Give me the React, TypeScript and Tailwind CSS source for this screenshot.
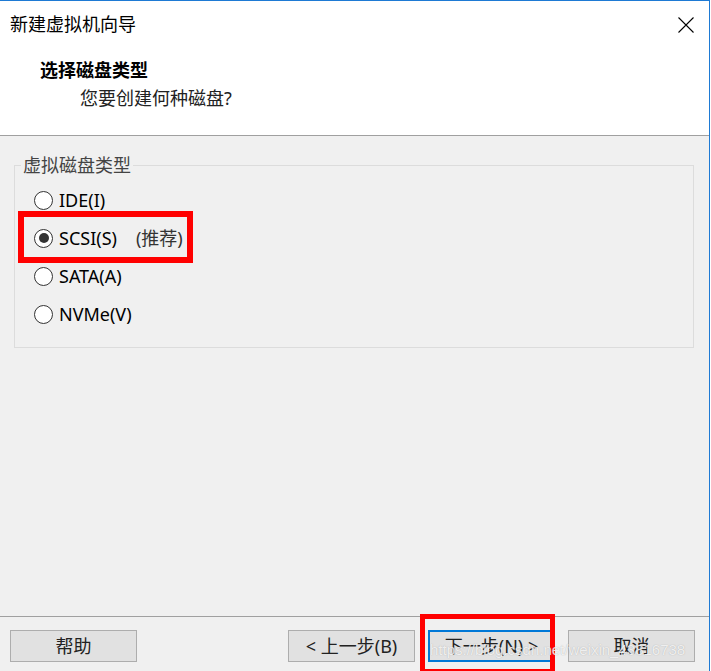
import React from "react";

const font = { fontFamily: '"Noto Sans", "Noto Sans CJK SC", sans-serif' };

const diskTypes = [
  { label: "IDE(I)", checked: false },
  { label: "SCSI(S)", note: "(推荐)", checked: true },
  { label: "SATA(A)", checked: false },
  { label: "NVMe(V)", checked: false },
];

function Radio({ checked }: { checked: boolean }) {
  return (
    <span className="flex h-[19px] w-[19px] items-center justify-center rounded-full border border-[#333] bg-white">
      {checked && <span className="h-[10px] w-[10px] rounded-full bg-[#333]" />}
    </span>
  );
}

function WinButton({ children, focused }: { children: React.ReactNode; focused?: boolean }) {
  return (
    <button
      className={
        focused
          ? "flex h-[32px] w-[127px] items-center justify-center border-2 border-[#0078d7] bg-[#e1e1e1] text-[18px] text-[#222]"
          : "flex h-[32px] w-[127px] items-center justify-center border border-[#adadad] bg-[#e1e1e1] text-[18px] text-[#222]"
      }
    >
      {children}
    </button>
  );
}

export default function App() {
  return (
    <div className="relative h-[671px] w-[711px] overflow-hidden bg-white" style={font}>
      <div className="flex h-full w-[710px] flex-col border-r border-t border-r-[#1e7ad4] border-t-[#1e7ad4]">
        {/* header */}
        <div className="h-[135px] shrink-0 border-b border-[#a0a0a0] bg-white">
          <div className="flex items-start justify-between pl-[10px] pr-[15px] pt-[11px]">
            <span className="text-[18px] leading-[24px] text-black">新建虚拟机向导</span>
            <svg className="mt-[5px]" width="16" height="16" viewBox="0 0 16 16" fill="none">
              <path d="M0.5 0.5L15.5 15.5M15.5 0.5L0.5 15.5" stroke="#000" strokeWidth="1.1" />
            </svg>
          </div>
          <div className="mt-[22px] pl-[40px] text-[18px] font-bold leading-[24px] text-black">选择磁盘类型</div>
          <div className="mt-[4px] pl-[80px] text-[18px] leading-[24px] text-[#222]">您要创建何种磁盘?</div>
        </div>

        {/* body */}
        <div className="flex-1 bg-[#f0f0f0] pl-[14px] pr-[15px] pt-[29px]">
          <div className="relative h-[183px] border border-[#dcdcdc]">
            <span className="absolute -top-[13px] left-[6px] bg-[#f0f0f0] px-[2px] text-[18px] leading-[24px] text-[#444]">
              虚拟磁盘类型
            </span>
            <div className="flex flex-col pl-[19px] pt-[15px]">
              {diskTypes.map((d) => (
                <div key={d.label} className="flex h-[38px] items-center gap-[6px]">
                  <Radio checked={d.checked} />
                  <span className="text-[18px] text-black">{d.label}</span>
                  {d.note && <span className="ml-[13px] text-[18px] text-[#333]">{d.note}</span>}
                </div>
              ))}
            </div>
          </div>
        </div>

        {/* footer */}
        <div className="flex shrink-0 items-center justify-between border-t border-[#a0a0a0] bg-[#f0f0f0] pb-[9px] pl-[10px] pr-[14px] pt-[13px]">
          <WinButton>帮助</WinButton>
          <div className="flex gap-[13px]">
            <WinButton>&lt; 上一步(B)</WinButton>
            <WinButton focused>下一步(N) &gt;</WinButton>
            <WinButton>取消</WinButton>
          </div>
        </div>
      </div>

      {/* annotations */}
      <div className="absolute left-[18px] top-[211px] h-[52px] w-[175px] border-[6px] border-[#ff0000]" />
      <div className="absolute left-[420px] top-[614px] h-[60px] w-[135px] border-[5px] border-[#ff0000]" />
      <span
        className="absolute left-[430px] top-[641px] text-[15px] leading-[18px] text-white/80"
        style={{ fontFamily: '"Liberation Sans", sans-serif', textShadow: "0 0 1px rgba(120,120,120,0.6)" }}
      >
        https://blog.csdn.net/weixin_43816738
      </span>
      <div className="absolute left-0 top-0 h-[1px] w-[82px] bg-[#1e7ad4]" />
    </div>
  );
}
